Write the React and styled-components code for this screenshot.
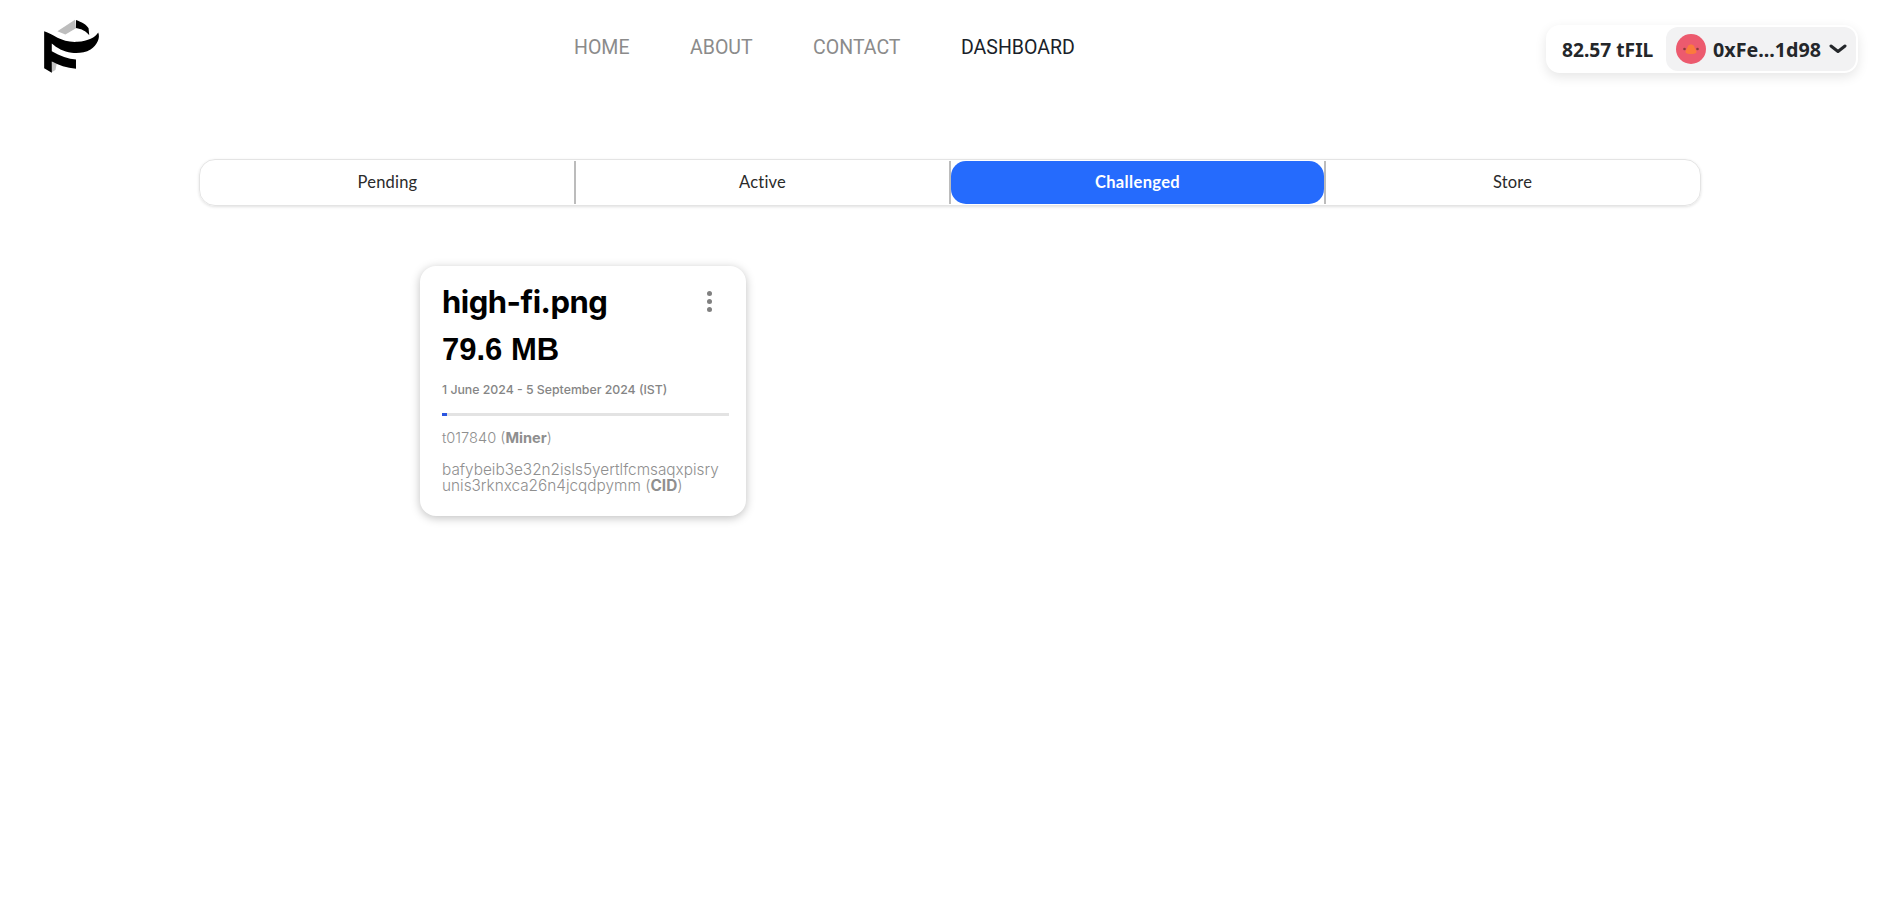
import React from "react";
import styled, { createGlobalStyle } from "styled-components";

const tabs = ["Pending", "Active", "Challenged", "Store"];
const links = ["HOME", "ABOUT", "CONTACT", "DASHBOARD"];

function Logo() {
  return (
    <svg width="60" height="58" viewBox="66 50 180 175">
      <path d="M112 93 L165 58 L168 84 L136 103 Z" fill="#bdbdbd" />
      <path d="M168 59 C185 66 200 72 206 84 L208 105 C198 92 185 86 168 83 Z" fill="#000" />
      <path d="M95 185 L110 191 L106 210 L92 218 Z" fill="#c4c4c4" />
      <path
        d="M72 93 C100 102 125 128 172 125 C205 123 226 112 235 97 C242 112 232 135 212 148 C195 158 175 160 155 158 C130 155 110 143 95 130 L95 153 C120 168 145 176 168 178 L168 206 C140 203 115 195 95 184 L95 218 L72 205 Z"
        fill="#000"
      />
    </svg>
  );
}

function Avatar() {
  return (
    <svg width="30" height="30" viewBox="0 0 30 30">
      <circle cx="15" cy="15" r="15" fill="#ec5a6e" />
      <path d="M9.5 18 C10 15 11.5 14 12 12 C13 10 17 10 18 12 C18.5 14 20 15 20.5 18 C20.5 19.5 18 20 15 20 C12 20 9.5 19.5 9.5 18 Z" fill="#fb7a3c" />
      <circle cx="8.5" cy="15" r="1.3" fill="#8a3a3a" />
      <circle cx="21.5" cy="15" r="1.3" fill="#8a3a3a" />
    </svg>
  );
}

export default function App() {
  return (
    <Page>
      <GlobalStyle />
      <Header>
        <LogoSlot>
          <Logo />
        </LogoSlot>
        <Nav>
          {links.map((l) => (
            <NavLink key={l} $active={l === "DASHBOARD"}>
              {l}
            </NavLink>
          ))}
        </Nav>
        <Wallet>
          <Balance>82.57 tFIL</Balance>
          <Account>
            <Avatar />
            <Address>0xFe...1d98</Address>
            <svg width="18" height="10" viewBox="0 0 18 10">
              <path d="M2 2 L9 7.5 L16 2" fill="none" stroke="#24272a" strokeWidth="3" strokeLinecap="round" strokeLinejoin="round" />
            </svg>
          </Account>
        </Wallet>
      </Header>

      <TabBar>
        {tabs.map((t, i) => (
          <React.Fragment key={t}>
            {i > 0 && <TabDivider />}
            <Tab $active={t === "Challenged"}>{t}</Tab>
          </React.Fragment>
        ))}
      </TabBar>

      <Cards>
        <Card>
          <TitleRow>
            <FileName>high-fi.png</FileName>
            <Dots>
              <i />
              <i />
              <i />
            </Dots>
          </TitleRow>
          <FileSize>79.6 MB</FileSize>
          <Dates>1 June 2024 - 5 September 2024 (IST)</Dates>
          <Progress>
            <ProgressFill style={{ width: "5px" }} />
          </Progress>
          <Miner>
            t017840 (<b>Miner</b>)
          </Miner>
          <Cid>
            bafybeib3e32n2isls5yertlfcmsaqxpisry
            <br />
            unis3rknxca26n4jcqdpymm (<b>CID</b>)
          </Cid>
        </Card>
      </Cards>
    </Page>
  );
}

const GlobalStyle = createGlobalStyle`
  body {
    margin: 0;
    background: #fff;
    font-family: "Lato", "Liberation Sans", sans-serif;
  }
`;

const Page = styled.div`
  min-height: 902px;
  overflow: hidden;
`;

const Header = styled.header`
  height: 94px;
  display: flex;
  align-items: flex-start;
  padding: 0 40px 0 42px;
`;

const LogoSlot = styled.div`
  width: 532px;
  padding-top: 17px;
  flex: none;
`;

const Nav = styled.nav`
  display: flex;
  gap: 65px;
  padding-top: 34px;
  flex: 1;
  transform: scaleX(0.93);
  transform-origin: left center;
`;

const NavLink = styled.a`
  font-family: "Roboto", "Liberation Sans", sans-serif;
  font-size: 21px;
  line-height: 26px;
  color: ${(p) => (p.$active ? "#1a1f2a" : "#8b8b8b")};
`;

const Wallet = styled.div`
  margin-top: 25px;
  height: 48px;
  width: 312px;
  display: flex;
  align-items: center;
  justify-content: space-between;
  padding: 2px;
  box-sizing: border-box;
  background: #fff;
  border-radius: 14px;
  box-shadow: 0 4px 12px rgba(0, 0, 0, 0.1);
`;

const Balance = styled.span`
  font-family: "Noto Sans", sans-serif;
  font-weight: 700;
  font-size: 19.2px;
  color: #24272a;
  padding-left: 14px;
`;

const Account = styled.div`
  width: 190px;
  height: 44px;
  display: flex;
  align-items: center;
  gap: 7px;
  padding: 0 9px 0 10px;
  box-sizing: border-box;
  background: #f2f2f3;
  border-radius: 12px;
`;

const Address = styled.span`
  font-family: "Noto Sans", sans-serif;
  font-weight: 700;
  font-size: 19.7px;
  color: #24272a;
  flex: 1;
  white-space: nowrap;
`;

const TabBar = styled.div`
  margin: 65px 0 0 199px;
  width: 1502px;
  height: 47px;
  box-sizing: border-box;
  padding: 1px;
  display: flex;
  border-radius: 16px;
  border: 1px solid #e4e4e4;
  box-shadow: 0 1px 3px rgba(0, 0, 0, 0.12);
`;

const TabDivider = styled.span`
  flex: none;
  width: 2px;
  background: #bcbcbc;
`;

const Tab = styled.div`
  flex: 1;
  display: flex;
  align-items: center;
  justify-content: center;
  font-size: 16.5px;
  letter-spacing: ${(p) => (p.$active ? "0.35px" : "0.2px")};
  padding-bottom: 2px;
  box-sizing: border-box;
  border-radius: ${(p) => (p.$active ? "15px" : "0")};
  background: ${(p) => (p.$active ? "#256bfd" : "transparent")};
  color: ${(p) => (p.$active ? "#fff" : "#2a2a2a")};
  font-weight: ${(p) => (p.$active ? 700 : 400)};
`;

const Cards = styled.div`
  padding: 60px 0 0 420px;
`;

const Card = styled.div`
  width: 326px;
  height: 250px;
  box-sizing: border-box;
  padding: 16px 18px 0 22px;
  background: #fff;
  border-radius: 16px;
  box-shadow: 0 2px 10px rgba(0, 0, 0, 0.25);
`;

const TitleRow = styled.div`
  display: flex;
  justify-content: space-between;
  align-items: flex-start;
`;

const FileName = styled.div`
  font-family: "Inter", sans-serif;
  font-size: 31px;
  font-weight: 700;
  letter-spacing: -0.5px;
  line-height: 40px;
  color: #000;
`;

const Dots = styled.div`
  display: flex;
  flex-direction: column;
  gap: 3px;
  padding: 9px 16px 0 0;

  i {
    width: 5px;
    height: 5px;
    border-radius: 50%;
    background: #808080;
  }
`;

const FileSize = styled.div`
  font-family: "Liberation Sans", sans-serif;
  font-weight: 700;
  font-size: 31px;
  line-height: 40px;
  margin-top: 8px;
  color: #000;
`;

const Dates = styled.div`
  font-family: "Inter", sans-serif;
  font-size: 12.3px;
  font-weight: 500;
  line-height: 15px;
  color: #858585;
  margin-top: 12px;
`;

const Progress = styled.div`
  margin-top: 16px;
  height: 3px;
  background: #e3e3e3;
  width: 287px;
`;

const ProgressFill = styled.div`
  height: 100%;
  background: #2b55e0;
`;

const Miner = styled.div`
  font-family: "Inter", sans-serif;
  font-size: 14.6px;
  font-weight: 300;
  line-height: 18px;
  color: #8f8f8f;
  margin-top: 13px;

  b {
    font-weight: 700;
  }
`;

const Cid = styled.div`
  font-family: "Inter", sans-serif;
  font-size: 15.35px;
  line-height: 16px;
  font-weight: 300;
  color: #8f8f8f;
  margin-top: 15px;
  white-space: nowrap;

  b {
    font-weight: 700;
  }
`;
